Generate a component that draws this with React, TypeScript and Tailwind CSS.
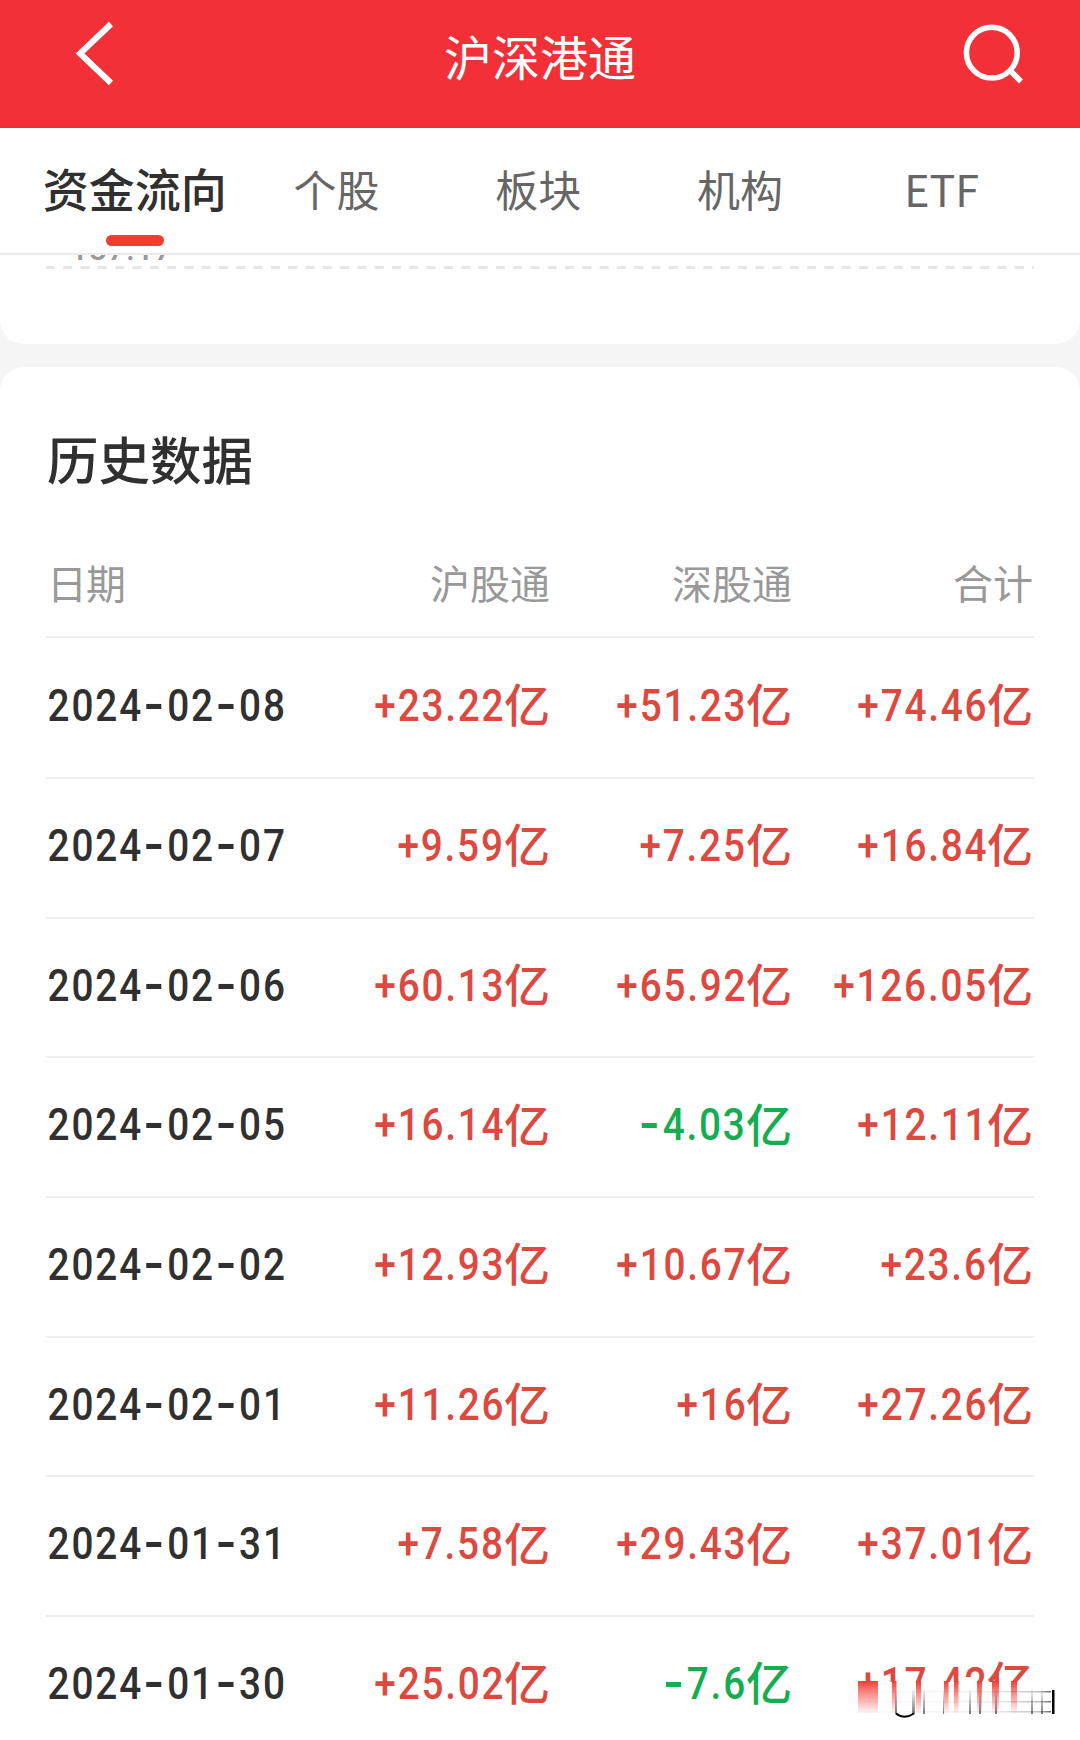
import { useState } from 'react';

const TABS = ['资金流向', '个股', '板块', '机构', 'ETF'];

const ROWS: [string, string, string, string][] = [
  ['2024-02-08', '+23.22', '+51.23', '+74.46'],
  ['2024-02-07', '+9.59', '+7.25', '+16.84'],
  ['2024-02-06', '+60.13', '+65.92', '+126.05'],
  ['2024-02-05', '+16.14', '-4.03', '+12.11'],
  ['2024-02-02', '+12.93', '+10.67', '+23.6'],
  ['2024-02-01', '+11.26', '+16', '+27.26'],
  ['2024-01-31', '+7.58', '+29.43', '+37.01'],
  ['2024-01-30', '+25.02', '-7.6', '+17.42'],
];

// Streaks of the smudge in the corner: x, width
const RED_STREAKS = [[858, 20], [892, 4.5], [916, 5], [944, 4.5], [954, 4.5], [977, 5], [992, 7], [1011, 6]];
const DARK_STREAKS = [[895, 2], [912, 3], [923, 2], [943, 1], [969, 2], [979, 2], [995, 2], [1031, 2], [1041, 2]];

// Digits are condensed, the dash takes a full digit cell
function Digits({ text }: { text: string }) {
  return (
    <>
      {text.split(/(-)/).filter(Boolean).map((part, i) =>
        part === '-' ? (
          <span key={i} className="inline-block w-[28px] text-center tracking-normal">
            <span className="inline-block scale-x-[1.5] scale-y-[1.2] -translate-x-[1px] -translate-y-[1px]">-</span>
          </span>
        ) : (
          <span key={i}>{part}</span>
        )
      )}
    </>
  );
}

function Amount({ value }: { value: string }) {
  return (
    <div className={`flex items-center justify-end ${value.startsWith('-') ? 'text-[#14ad51]' : 'text-[#dd483f]'}`}>
      <span className="font-['Roboto'] origin-right scale-x-[0.86] tracking-[2.1px]">
        <Digits text={value} />
      </span>
      <span className="text-[46px] -mt-[7px] -ml-px">亿</span>
    </div>
  );
}

function Smudge() {
  return (
    <svg className="absolute right-0 bottom-0 w-[260px] h-[60px]" viewBox="820 1680 260 60">
      <defs>
        <linearGradient id="red" x1="0" y1="0" x2="0" y2="1">
          <stop offset="0" stopColor="#ee3f35" />
          <stop offset="0.35" stopColor="#f5382e" stopOpacity="0.6" />
          <stop offset="1" stopColor="#f5382e" stopOpacity="0.04" />
        </linearGradient>
        <linearGradient id="dark" x1="0" y1="0" x2="0" y2="1">
          <stop offset="0" stopColor="#222222" stopOpacity="0" />
          <stop offset="1" stopColor="#222222" stopOpacity="0.6" />
        </linearGradient>
        <linearGradient id="lines" x1="0" y1="0" x2="1" y2="0">
          <stop offset="0" stopColor="#222222" stopOpacity="0" />
          <stop offset="0.75" stopColor="#222222" stopOpacity="0.08" />
          <stop offset="0.95" stopColor="#222222" stopOpacity="0.3" />
          <stop offset="1" stopColor="#222222" stopOpacity="0.7" />
        </linearGradient>
      </defs>
      <rect x="820" y="1682" width="260" height="58" fill="#ffffff" />
      {RED_STREAKS.map(([x, w]) => (
        <rect key={x} x={x} y="1681" width={w} height="32" fill="url(#red)" />
      ))}
      {DARK_STREAKS.map(([x, w]) => (
        <rect key={x} x={x} y="1688" width={w} height="26" fill="url(#dark)" />
      ))}
      {[1691, 1701, 1711].map(y => (
        <rect key={y} x="830" y={y} width="221" height="1.5" fill="url(#lines)" />
      ))}
      <path d="M896 1713.5 Q904 1720 914 1713.5" fill="none" stroke="#000000" strokeWidth="2" />
      <rect x="1052" y="1690" width="2.5" height="24" fill="#000000" />
    </svg>
  );
}

export default function App() {
  const [active, setActive] = useState(0);

  return (
    <div className="relative w-[1080px] h-[1740px] overflow-hidden flex flex-col bg-[#f5f5f5] font-['Noto_Sans_CJK_SC',sans-serif]">
      {/* Header */}
      <header className="h-[128px] shrink-0 bg-[#f32f38] border-b-2 border-[#d9363e] flex items-start justify-between text-white">
        <svg className="w-[80px] h-[110px] ml-[55px]" viewBox="55 0 80 110" fill="none" stroke="currentColor" strokeWidth="6">
          <path d="M111 24 L80 53.5 L111 83" />
        </svg>
        <h1 className="h-[111px] leading-[111px] -ml-[10px] text-[48px] font-normal">沪深港通</h1>
        <svg className="w-[80px] h-[110px] mr-[45px]" viewBox="955 0 80 110" fill="none" stroke="currentColor" strokeWidth="5.5">
          <circle cx="991.8" cy="52.7" r="25.4" />
          <path d="M1009 69.5 L1021 81.5" />
        </svg>
      </header>

      {/* Tabs */}
      <nav className="h-[127px] shrink-0 bg-white border-b-2 border-[#ebebeb] px-[34px] flex">
        {TABS.map((tab, i) => (
          <button
            key={tab}
            onClick={() => setActive(i)}
            className="w-[201.7px] flex flex-col items-center"
          >
            <span className={`h-[107px] whitespace-nowrap ${i === active ? 'leading-[118px] text-[46px] font-medium text-[#303030]' : 'leading-[120px] text-[43px] text-[#666666]'}`}>
              {tab}
            </span>
            {i === active && <span className="w-[58px] h-[11px] rounded-full bg-[#f43c30]" />}
          </button>
        ))}
      </nav>

      {/* Bottom of the chart card, scrolled under the tabs */}
      <section className="h-[89px] shrink-0 bg-white rounded-b-[24px] px-[46px]">
        <div className="h-[5px] overflow-hidden flex items-end pl-[24px]">
          <span className="font-['Roboto'] font-medium text-[32px] leading-[21px] tracking-[0.5px] text-[#999999]">187.17</span>
        </div>
        <svg className="block w-[988px] h-[16px]" viewBox="0 0 988 16">
          <path d="M0 7.5 H988" stroke="#e6e6e6" strokeWidth="3" strokeDasharray="9 8.3" />
        </svg>
      </section>

      {/* History */}
      <section className="mt-[23px] grow bg-white rounded-t-[24px] px-[46px]">
        <h2 className="h-[137px] pt-[52px] pl-px leading-[77px] text-[51.5px] font-medium text-[#303030]">历史数据</h2>
        <div className="h-[134px] border-b-2 border-[#eeeeee] grid grid-cols-[264px_240px_242px_241px] text-[40px] leading-[156px] text-[#999999]">
          <span className="pl-px tracking-[-1px]">日期</span>
          <span className="text-right">沪股通</span>
          <span className="text-right">深股通</span>
          <span className="text-right">合计</span>
        </div>
        {ROWS.map(([date, hu, shen, total], i) => (
          <div
            key={date}
            className={`${i === 0 ? 'h-[141px]' : 'h-[139.7px]'} pb-[4px] border-b-2 border-[#eeeeee] grid grid-cols-[264px_240px_242px_241px] items-center text-[45px] leading-[60px] font-medium`}
          >
            <span className="font-['Roboto'] whitespace-nowrap origin-left translate-x-[1.5px] scale-x-[0.86] tracking-[2.2px] text-[#303030]">
              <Digits text={date} />
            </span>
            <Amount value={hu} />
            <Amount value={shen} />
            <Amount value={total} />
          </div>
        ))}
      </section>

      <Smudge />
    </div>
  );
}
